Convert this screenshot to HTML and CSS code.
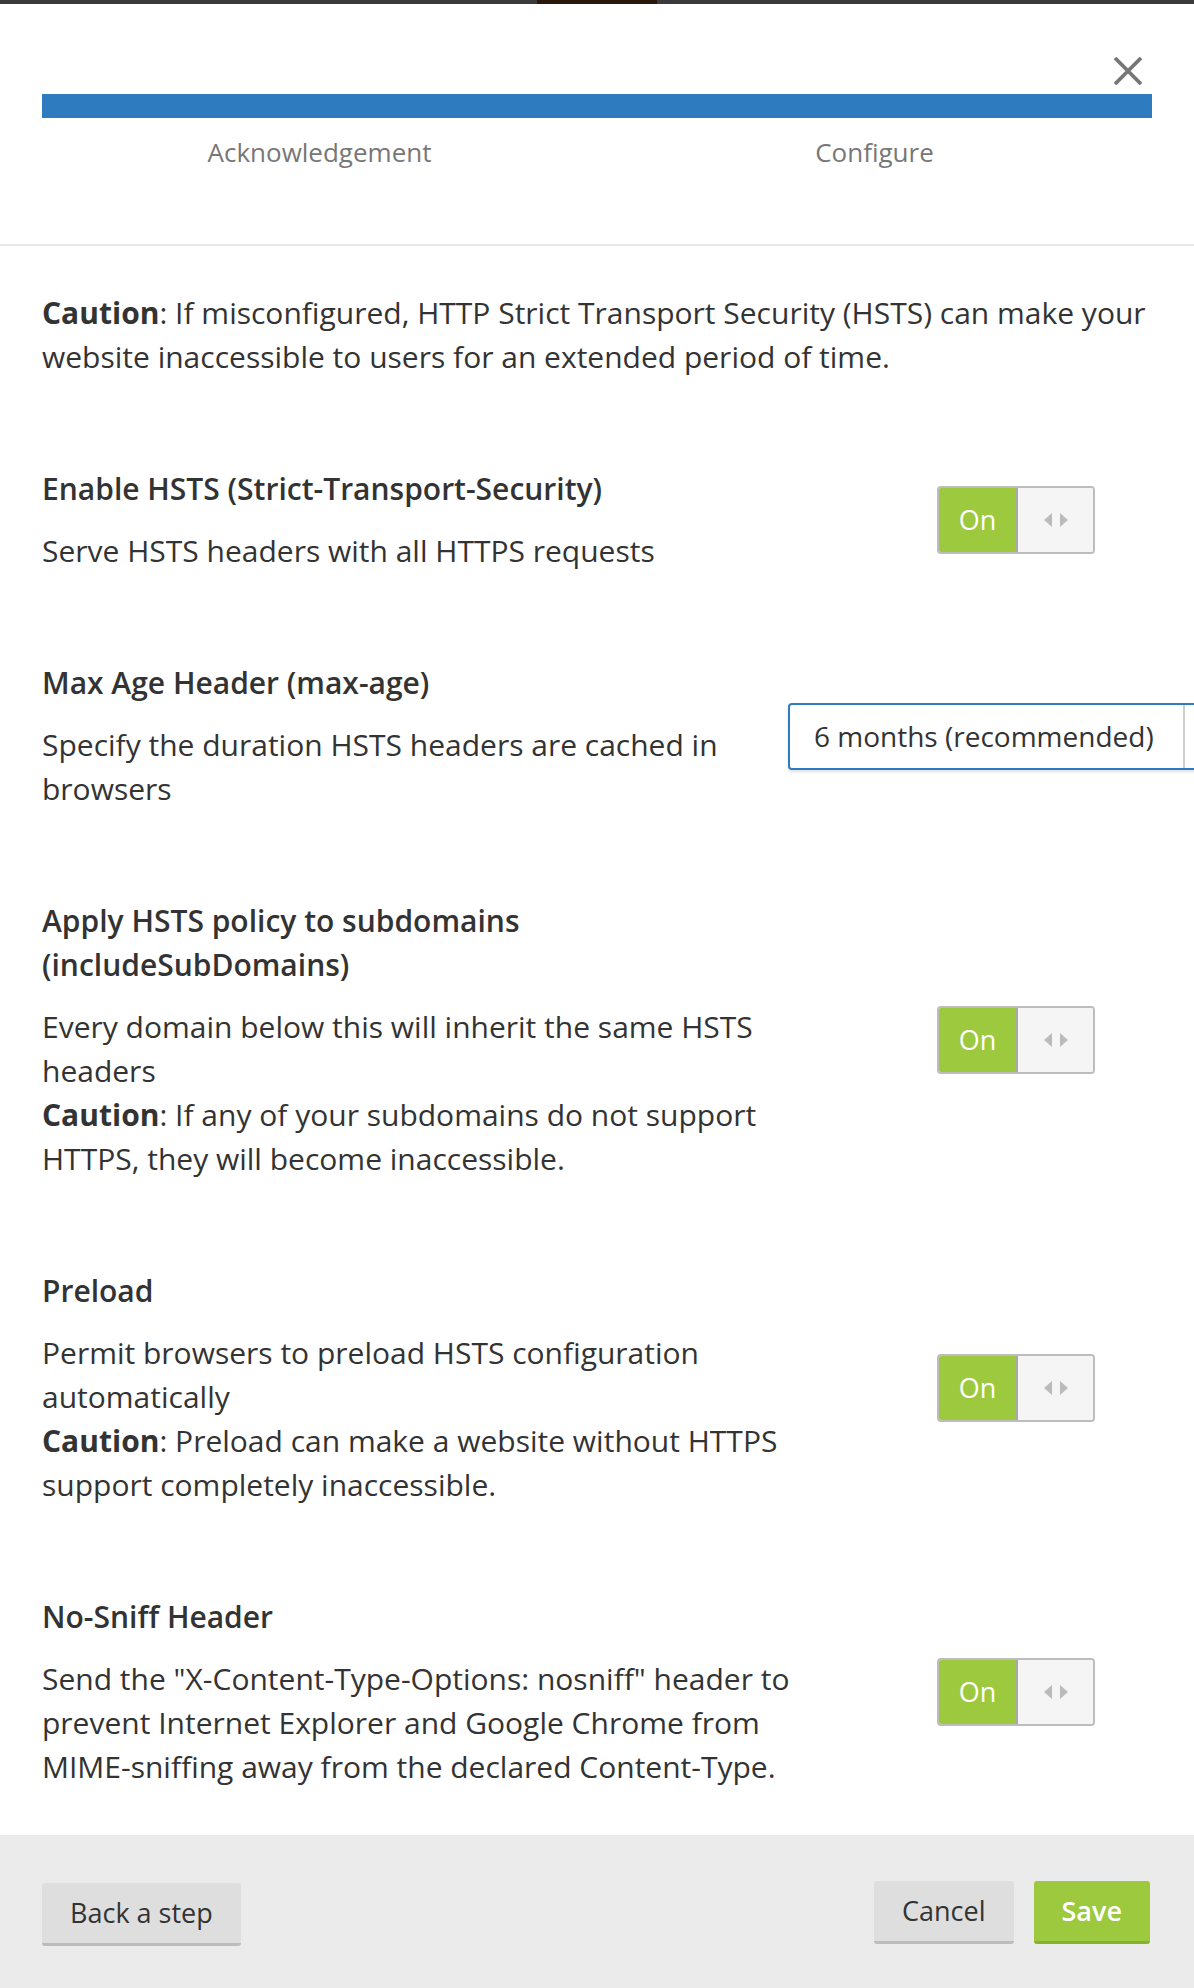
FILE: index.html
```html
<!DOCTYPE html>
<html lang="en">
<head>
    <meta charset="UTF-8">
    <meta name="viewport" content="width=device-width, initial-scale=1.0">
    <title>HSTS Settings</title>
    <link rel="stylesheet" href="styles.css">
</head>
<body>

    <div class="top-strip"><span class="top-strip-mark"></span></div>

    <div class="modal">
        <div class="modal-head">
            <div class="close-row">
                <button class="close-btn" aria-label="Close">
                    <svg width="30" height="28" viewBox="0 0 30 28">
                        <path d="M2 1 L28 27 M28 1 L2 27" stroke="#777" stroke-width="3.8" fill="none"/>
                    </svg>
                </button>
            </div>
            <div class="progress"></div>
            <ol class="steps">
                <li>Acknowledgement</li>
                <li>Configure</li>
            </ol>
        </div>

        <div class="modal-body">
            <p class="intro"><b>Caution</b>: If misconfigured, HTTP Strict Transport Security (HSTS) can make your website inaccessible to users for an extended period of time.</p>

            <div class="setting">
                <div class="setting-text">
                    <h3>Enable HSTS (Strict-Transport-Security)</h3>
                    <p>Serve HSTS headers with all HTTPS requests</p>
                </div>
                <div class="setting-control">
                    <div class="toggle">
                        <span class="toggle-on">On</span>
                        <span class="toggle-handle"><i class="arrow-left"></i><i class="arrow-right"></i></span>
                    </div>
                </div>
            </div>

            <div class="setting">
                <div class="setting-text">
                    <h3>Max Age Header (max-age)</h3>
                    <p>Specify the duration HSTS headers are cached in browsers</p>
                </div>
                <div class="setting-control">
                    <div class="select">
                        <span class="select-value">6 months (recommended)</span>
                        <span class="select-caret"></span>
                    </div>
                </div>
            </div>

            <div class="setting">
                <div class="setting-text">
                    <h3>Apply HSTS policy to subdomains (includeSubDomains)</h3>
                    <p>Every domain below this will inherit the same HSTS headers<br><b>Caution</b>: If any of your subdomains do not support HTTPS, they will become inaccessible.</p>
                </div>
                <div class="setting-control">
                    <div class="toggle">
                        <span class="toggle-on">On</span>
                        <span class="toggle-handle"><i class="arrow-left"></i><i class="arrow-right"></i></span>
                    </div>
                </div>
            </div>

            <div class="setting">
                <div class="setting-text">
                    <h3>Preload</h3>
                    <p>Permit browsers to preload HSTS configuration automatically<br><b>Caution</b>: Preload can make a website without HTTPS support completely inaccessible.</p>
                </div>
                <div class="setting-control">
                    <div class="toggle">
                        <span class="toggle-on">On</span>
                        <span class="toggle-handle"><i class="arrow-left"></i><i class="arrow-right"></i></span>
                    </div>
                </div>
            </div>

            <div class="setting">
                <div class="setting-text">
                    <h3>No-Sniff Header</h3>
                    <p>Send the "X-Content-Type-Options: nosniff" header to prevent Internet Explorer and Google Chrome from MIME-sniffing away from the declared Content-Type.</p>
                </div>
                <div class="setting-control">
                    <div class="toggle">
                        <span class="toggle-on">On</span>
                        <span class="toggle-handle"><i class="arrow-left"></i><i class="arrow-right"></i></span>
                    </div>
                </div>
            </div>
        </div>

        <div class="modal-foot">
            <button class="btn btn-back">Back a step</button>
            <div class="foot-actions">
                <button class="btn">Cancel</button>
                <button class="btn btn-save">Save</button>
            </div>
        </div>
    </div>

</body>
</html>
```

FILE: styles.css
```css
html, body {
    margin: 0;
    padding: 0;
    background: #fff;
    overflow-x: hidden;
}

body {
    font-family: "Open Sans", "DejaVu Sans", sans-serif;
    color: #333;
}

.top-strip {
    height: 4px;
    background-color: #3b3b3b;
    position: relative;
}

.top-strip-mark {
    position: absolute;
    left: 537px;
    top: 0;
    width: 120px;
    height: 4px;
    background-color: #2a170b;
}

.modal {
    overflow: hidden;
}

/* header with progress */
.modal-head {
    padding: 0 42px;
    border-bottom: 2px solid #e7e7e7;
}

.close-row {
    display: flex;
    justify-content: flex-end;
    padding-top: 53px;
    margin-bottom: 9px;
}

.close-btn {
    width: 30px;
    height: 28px;
    padding: 0;
    margin-right: 9px;
    border: 0;
    background: none;
    cursor: pointer;
}

.close-btn svg {
    display: block;
}

.progress {
    height: 24px;
    background-color: #2f7bbf;
}

.steps {
    display: grid;
    grid-template-columns: 1fr 1fr;
    list-style: none;
    margin: 16px 0 0 0;
    padding: 0 0 74px 0;
}

.steps li {
    text-align: center;
    font-size: 26px;
    line-height: 36px;
    color: #777;
}

/* body */
.modal-body {
    padding: 45px 0 46px 42px;
    display: flex;
    flex-direction: column;
    gap: 88px;
}

.intro {
    margin: 0;
    width: 1110px;
    font-size: 30px;
    line-height: 44px;
}

.intro b,
.setting-text b {
    font-weight: 700;
}

.setting {
    display: grid;
    grid-template-columns: 746px 456px;
    align-items: center;
}

.setting-text h3 {
    margin: 0 0 18px 0;
    font-size: 30px;
    line-height: 44px;
    font-weight: 600;
    color: #333;
}

.setting-text p {
    margin: 0 -40px 0 0;
    font-size: 30px;
    line-height: 44px;
}

.setting-control {
    display: flex;
    justify-content: center;
}

/* on/off switch */
.toggle {
    display: flex;
    width: 154px;
    height: 64px;
    border: 2px solid #bdbdbd;
    border-radius: 4px;
    overflow: hidden;
}

.toggle-on {
    width: 77px;
    background-color: #9cc93d;
    color: #fff;
    font-size: 27px;
    line-height: 64px;
    text-align: center;
    border-right: 2px solid #a8a8a8;
}

.toggle-handle {
    flex: 1;
    background-color: #f5f5f5;
    display: flex;
    align-items: center;
    justify-content: center;
    gap: 8px;
}

.arrow-left,
.arrow-right {
    width: 0;
    height: 0;
    border-top: 7.5px solid transparent;
    border-bottom: 7.5px solid transparent;
}

.arrow-left {
    border-right: 8px solid #bbb;
}

.arrow-right {
    border-left: 8px solid #bbb;
}

/* dropdown */
.select {
    display: flex;
    width: 100%;
    height: 63px;
    border: 2px solid #2f7bbf;
    border-radius: 4px;
    box-shadow: 0 2px 3px rgba(0, 0, 0, 0.12);
    background: #fff;
}

.select-value {
    width: 369px;
    padding-left: 24px;
    font-size: 28px;
    line-height: 63px;
    color: #333;
    border-right: 2px solid #cfcfcf;
    white-space: nowrap;
}

.select-caret {
    flex: 1;
}

/* footer */
.modal-foot {
    background-color: #ebebeb;
    height: 154px;
    box-sizing: border-box;
    padding: 46px 44px 0 42px;
    display: flex;
    justify-content: space-between;
    align-items: flex-start;
}

.foot-actions {
    display: flex;
    gap: 20px;
}

.btn {
    font-family: "Open Sans", "DejaVu Sans", sans-serif;
    font-size: 27px;
    line-height: 60px;
    padding: 0 28px;
    background-color: #dedede;
    color: #333;
    border: 0;
    border-bottom: 3px solid #bcbcbc;
    border-radius: 3px;
    cursor: pointer;
}

.btn-back {
    margin-top: 2px;
}

.btn-save {
    background-color: #9cc93d;
    border-bottom-color: #86b12c;
    color: #fff;
    font-weight: 600;
}
```
